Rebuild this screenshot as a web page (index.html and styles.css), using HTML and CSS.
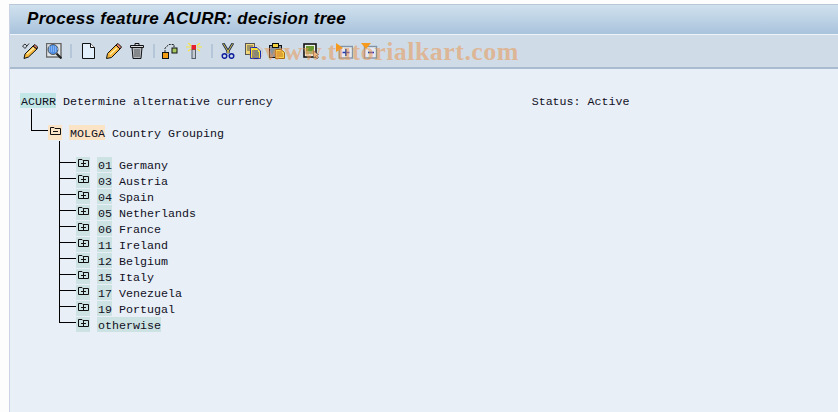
FILE: index.html
```html
<!DOCTYPE html>
<html lang="en">
<head>
    <meta charset="UTF-8">
    <title>Process feature ACURR: decision tree</title>
    <link rel="stylesheet" href="styles.css">
</head>
<body>
    <div class="window">
        <!-- title -->
        <div class="title-bar">
            <h1 class="title">Process feature ACURR: decision tree</h1>
        </div>

        <!-- toolbar -->
        <div class="toolbar">
            <svg class="icon" viewBox="0 0 16 16">
                <path d="M0.5 3 L3 1 L5 3 L7 0.5 M0.5 3 L3 5.5 L5 3" fill="none" stroke="#333" stroke-width="1"/>
                <path d="M3 11 L11 3 L15 6 L6.5 14 L2 15.5 Z" fill="#f6b73c" stroke="#111" stroke-width="1"/>
                <path d="M5 11 L12 5" stroke="#fff2b0" stroke-width="1.2"/>
                <path d="M11 3 L13 1.5 L15.5 4 L15 6 Z" fill="#e8826a" stroke="#111" stroke-width="1"/>
            </svg>
            <svg class="icon" viewBox="0 0 16 16">
                <rect x="0.5" y="0.5" width="14.5" height="13.5" fill="#dfe6ea" stroke="#666" stroke-width="1.4"/>
                <circle cx="7" cy="6.5" r="5" fill="#4f8fe6" stroke="#555"/>
                <path d="M3 4 H11 M3 6 H12 M3 8 H11" stroke="#b9d4f6" stroke-width="1" stroke-dasharray="1 1"/>
                <path d="M10.5 10.5 L15.5 15.5" stroke="#222" stroke-width="2.2"/>
            </svg>
            <span class="sep sep-first"></span>
            <svg class="icon icon-narrow" viewBox="0 0 16 16">
                <path d="M0.5 0.5 H8.5 L12.5 4.5 V15.5 H0.5 Z" fill="#e3effa" stroke="#111"/>
                <path d="M8.5 0.5 V4.5 H12.5" fill="#fff" stroke="#111"/>
            </svg>
            <svg class="icon" viewBox="0 0 16 16">
                <path d="M1.5 10.5 L10 2 L14 6 L5.5 14.5 L0.5 15.5 Z" fill="#f6b73c" stroke="#111"/>
                <path d="M4 11.5 L11 5" stroke="#fff2b0" stroke-width="1.3"/>
                <path d="M10 2 L12 0.5 L15.5 4 L14 6 Z" fill="#e8826a" stroke="#111"/>
            </svg>
            <svg class="icon" viewBox="0 0 16 16">
                <path d="M2 4.5 H12 L11 15.5 H3 Z" fill="#b7bcc0" stroke="#111"/>
                <path d="M0.5 2.5 H13.5 V4.5 H0.5 Z M5 2.5 V0.5 H9 V2.5" fill="#d8dcdf" stroke="#111"/>
                <path d="M5 6 V14 M7 6 V14 M9 6 V14" stroke="#555"/>
            </svg>
            <span class="sep sep-second"></span>
            <svg class="icon" viewBox="0 0 16 16">
                <path d="M3 9 V5 L7 1.5 H12 V5" fill="none" stroke="#222" stroke-dasharray="2 1"/>
                <rect x="0.5" y="9.5" width="6" height="6" fill="#f39c12" stroke="#111"/>
                <rect x="10" y="5" width="5" height="5" fill="#a8c860" stroke="#111"/>
            </svg>
            <svg class="icon" viewBox="0 0 16 16">
                <path d="M2 0 L5 2.5 M14 0 L11 2.5 M0 4 H5 M11 4 H16 M2 8 L5 6 M14 8 L11 6" stroke="#f7e33c" stroke-width="1.2"/>
                <rect x="6" y="6.5" width="3.5" height="9" fill="#c4ccd2" stroke="#55606a"/>
                <rect x="5.5" y="2" width="4.5" height="4.5" fill="#e8202a"/>
            </svg>
            <span class="sep sep-third"></span>
            <svg class="icon" viewBox="0 0 16 16">
                <path d="M2 0 L8 10 M12 0 L6 10" stroke="#1d2a50" stroke-width="2.6"/>
                <path d="M2.2 0.5 L8 10 M11.8 0.5 L6 10" stroke="#e8d24a" stroke-width="0.9"/>
                <circle cx="3.5" cy="13" r="2.3" fill="none" stroke="#10209c" stroke-width="1.5"/>
                <circle cx="10.5" cy="13" r="2.3" fill="none" stroke="#10209c" stroke-width="1.5"/>
            </svg>
            <svg class="icon" viewBox="0 0 16 16">
                <rect x="0.5" y="0.5" width="9" height="11" fill="#f0d878" stroke="#555"/>
                <path d="M2 3 H8 M2 5 H8 M2 7 H5" stroke="#555"/>
                <path d="M5.5 4.5 H12 L15.5 8 V15.5 H5.5 Z" fill="#f8e838" stroke="#1428b0"/>
                <path d="M7 8 H13 M7 10 H14 M7 12 H14 M7 14 H14" stroke="#1428b0"/>
            </svg>
            <svg class="icon" viewBox="0 0 16 16">
                <rect x="0.5" y="2.5" width="12" height="12" fill="#8a94a0" stroke="#111"/>
                <rect x="3.5" y="0.5" width="6" height="4" fill="#f2d23c" stroke="#111"/>
                <path d="M6.5 6.5 H12 L15.5 9.5 V15.5 H6.5 Z" fill="#f9d24a" stroke="#a86a10"/>
                <path d="M8 9 H13 M8 11 H14 M8 13 H14" stroke="#c0761a"/>
            </svg>
            <svg class="icon icon-far" viewBox="0 0 16 16">
                <rect x="1" y="1" width="12" height="13" fill="#eef0ea" stroke="#111" stroke-width="1.6"/>
                <rect x="3" y="3" width="8" height="5" fill="#6a9a30"/>
                <rect x="3" y="8" width="8" height="3" fill="#a8b070"/>
                <path d="M10.5 8 V15 L12.5 13.5 L14 16 L15.5 14 L13.5 12.5 L15.5 11.5 Z" fill="#f6cfa0" stroke="#444" stroke-width="0.7"/>
            </svg>
            <svg class="icon icon-wide icon-expand" viewBox="0 0 17 16">
                <rect x="3.5" y="3.5" width="13" height="11.5" fill="#e6ebf2" stroke="#8494a8" stroke-width="1.4"/>
                <path d="M10 6 V13 M6.5 9.5 H13.5" stroke="#2438b8" stroke-width="1.6"/>
                <path d="M0 0 L7 5 L0 9 Z" fill="#f59a1c"/>
            </svg>
            <svg class="icon icon-wide" viewBox="0 0 17 16">
                <rect x="3.5" y="3.5" width="12" height="11.5" fill="#e6ebf2" stroke="#8494a8" stroke-width="1.4"/>
                <path d="M7 9.5 H13" stroke="#2438b8" stroke-width="1.6"/>
                <path d="M0 0 H10 L5 6 Z" fill="#f59a1c"/>
            </svg>
        </div>

        <!-- decision tree -->
        <div class="tree">
            <div class="row"><span class="key key-root">ACURR</span> Determine alternative currency                                     Status: Active</div>
            <div class="row"><span class="stem stem-root"></span></div>
            <div class="row">
                <span class="elbow elbow-root"></span>
                <span class="node node-open"><svg class="folder" viewBox="0 0 11 8"><path d="M0.5 7.5 V0.5 H4 L5 1.5 H10.5 V7.5 Z" fill="none" stroke="#111"/><path d="M3 4.5 H8" stroke="#111"/></svg></span>
                <span class="key key-field">MOLGA</span> Country Grouping
            </div>
            <div class="row"><span class="stem"></span></div>

            <div class="row"><span class="elbow"></span><span class="node"><svg class="folder" viewBox="0 0 11 8"><path d="M0.5 7.5 V0.5 H4 L5 1.5 H10.5 V7.5 Z" fill="none" stroke="#111"/><path d="M3 4.5 H8 M5.5 2 V7" stroke="#111"/></svg></span><span class="key">01</span> Germany</div>
            <div class="row"><span class="elbow"></span><span class="node"><svg class="folder" viewBox="0 0 11 8"><path d="M0.5 7.5 V0.5 H4 L5 1.5 H10.5 V7.5 Z" fill="none" stroke="#111"/><path d="M3 4.5 H8 M5.5 2 V7" stroke="#111"/></svg></span><span class="key">03</span> Austria</div>
            <div class="row"><span class="elbow"></span><span class="node"><svg class="folder" viewBox="0 0 11 8"><path d="M0.5 7.5 V0.5 H4 L5 1.5 H10.5 V7.5 Z" fill="none" stroke="#111"/><path d="M3 4.5 H8 M5.5 2 V7" stroke="#111"/></svg></span><span class="key">04</span> Spain</div>
            <div class="row"><span class="elbow"></span><span class="node"><svg class="folder" viewBox="0 0 11 8"><path d="M0.5 7.5 V0.5 H4 L5 1.5 H10.5 V7.5 Z" fill="none" stroke="#111"/><path d="M3 4.5 H8 M5.5 2 V7" stroke="#111"/></svg></span><span class="key">05</span> Netherlands</div>
            <div class="row"><span class="elbow"></span><span class="node"><svg class="folder" viewBox="0 0 11 8"><path d="M0.5 7.5 V0.5 H4 L5 1.5 H10.5 V7.5 Z" fill="none" stroke="#111"/><path d="M3 4.5 H8 M5.5 2 V7" stroke="#111"/></svg></span><span class="key">06</span> France</div>
            <div class="row"><span class="elbow"></span><span class="node"><svg class="folder" viewBox="0 0 11 8"><path d="M0.5 7.5 V0.5 H4 L5 1.5 H10.5 V7.5 Z" fill="none" stroke="#111"/><path d="M3 4.5 H8 M5.5 2 V7" stroke="#111"/></svg></span><span class="key">11</span> Ireland</div>
            <div class="row"><span class="elbow"></span><span class="node"><svg class="folder" viewBox="0 0 11 8"><path d="M0.5 7.5 V0.5 H4 L5 1.5 H10.5 V7.5 Z" fill="none" stroke="#111"/><path d="M3 4.5 H8 M5.5 2 V7" stroke="#111"/></svg></span><span class="key">12</span> Belgium</div>
            <div class="row"><span class="elbow"></span><span class="node"><svg class="folder" viewBox="0 0 11 8"><path d="M0.5 7.5 V0.5 H4 L5 1.5 H10.5 V7.5 Z" fill="none" stroke="#111"/><path d="M3 4.5 H8 M5.5 2 V7" stroke="#111"/></svg></span><span class="key">15</span> Italy</div>
            <div class="row"><span class="elbow"></span><span class="node"><svg class="folder" viewBox="0 0 11 8"><path d="M0.5 7.5 V0.5 H4 L5 1.5 H10.5 V7.5 Z" fill="none" stroke="#111"/><path d="M3 4.5 H8 M5.5 2 V7" stroke="#111"/></svg></span><span class="key">17</span> Venezuela</div>
            <div class="row"><span class="elbow"></span><span class="node"><svg class="folder" viewBox="0 0 11 8"><path d="M0.5 7.5 V0.5 H4 L5 1.5 H10.5 V7.5 Z" fill="none" stroke="#111"/><path d="M3 4.5 H8 M5.5 2 V7" stroke="#111"/></svg></span><span class="key">19</span> Portugal</div>
            <div class="row"><span class="elbow elbow-last"></span><span class="node"><svg class="folder" viewBox="0 0 11 8"><path d="M0.5 7.5 V0.5 H4 L5 1.5 H10.5 V7.5 Z" fill="none" stroke="#111"/><path d="M3 4.5 H8 M5.5 2 V7" stroke="#111"/></svg></span><span class="key">otherwise</span></div>
        </div>
    </div>

    <!-- site watermark over the toolbar -->
    <div class="watermark"><span class="watermark-mark">©</span>www.tutorialkart.com</div>
</body>
</html>
```

FILE: styles.css
```css
* {
    margin: 0;
    padding: 0;
    box-sizing: border-box;
}

html, body {
    width: 838px;
    height: 412px;
    overflow: hidden;
}

body {
    position: relative;
    background: #fdfdfe;
    font-family: "Liberation Mono", monospace;
    font-size: 11.67px;
    color: #10101e;
}

.window {
    height: 408px;
    margin: 4px 0 0 9px;
    border-left: 1px solid #cbd3e4;
    border-top: 1px solid #b9c7d6;
    background: #e8eff7;
}

/* title */
.title-bar {
    height: 30px;
    background: linear-gradient(#d0e1ee 0%, #a9c3dc 100%);
    border-bottom: 1px solid #eef4fa;
    padding-left: 17px;
}

.title {
    font-family: "Liberation Sans", sans-serif;
    font-size: 17px;
    font-weight: bold;
    font-style: italic;
    letter-spacing: 0.3px;
    line-height: 27px;
    color: #000;
}

/* toolbar */
.toolbar {
    height: 34px;
    background: #cfdce8;
    border-bottom: 2px solid #a9bccf;
    padding: 8px 0 0 12px;
    display: flex;
    align-items: flex-start;
    gap: 8px;
}

.icon {
    width: 16px;
    height: 16px;
    flex: none;
}

.icon-far {
    margin-left: 10px;
}

.icon-wide {
    width: 17px;
}

.icon-expand {
    margin-left: 9px;
}

.sep {
    width: 2px;
    height: 14px;
    margin-top: 1px;
    background: #b4c6d8;
}

.sep-first {
    margin-right: 2px;
}

.sep-second {
    margin-left: -1px;
    margin-right: -1px;
}

.sep-third {
    margin-left: 1px;
}

/* tree */
.tree {
    padding: 24px 0 0 10px;
}

.row {
    display: flex;
    height: 16px;
    line-height: 19px;
    white-space: pre;
}

.key {
    height: 15px;
    padding-left: 1px;
    background: #cde2e2;
}

.key-root {
    background: #c3e7e7;
}

.key-field {
    background: #fbe3c6;
}

.node {
    width: 14px;
    height: 15px;
    margin-right: 7px;
    background: #cde2e2;
    padding: 2px 0 0 2px;
}

.node-open {
    background: #fbe3c6;
}

.folder {
    display: block;
    width: 11px;
    height: 8px;
}

.stem {
    width: 1px;
    height: 16px;
    margin-left: 39px;
    background: #000;
}

.stem-root {
    margin-left: 11px;
}

.elbow {
    width: 17px;
    height: 16px;
    margin-left: 39px;
    border-left: 1px solid #000;
    background: linear-gradient(#000, #000) 0 5px / 100% 1px no-repeat;
}

.elbow-root {
    margin-left: 11px;
    height: 6px;
}

.elbow-last {
    height: 6px;
}

.watermark {
    position: absolute;
    left: 248px;
    top: 37px;
    font-family: "Liberation Serif", serif;
    font-size: 26px;
    font-weight: bold;
    letter-spacing: 0.45px;
    line-height: 30px;
    white-space: nowrap;
    color: rgba(232, 150, 80, 0.55);
}

.watermark-mark {
    font-size: 21px;
    font-weight: normal;
    color: rgba(232, 150, 80, 0.4);
}
```
